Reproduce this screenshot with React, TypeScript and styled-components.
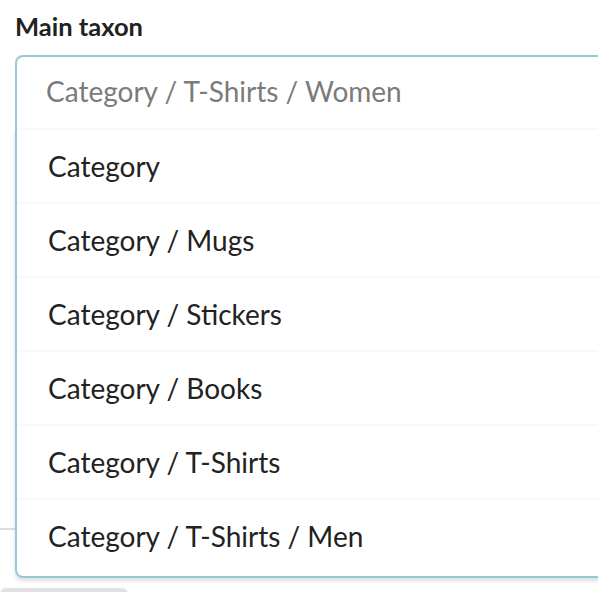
import React from "react";
import styled, { createGlobalStyle } from "styled-components";

const GlobalStyle = createGlobalStyle`
  html, body {
    margin: 0;
    padding: 0;
    background: #ffffff;
    overflow: hidden;
    font-family: Lato, "Open Sans", "Liberation Sans", sans-serif;
  }
`;

const taxons = [
  "Category",
  "Category / Mugs",
  "Category / Stickers",
  "Category / Books",
  "Category / T-Shirts",
  "Category / T-Shirts / Men",
];

export default function App() {
  return (
    <Page>
      <GlobalStyle />
      <Field>
        <Label>Main taxon</Label>
        <Dropdown>
          <Selected>Category / T-Shirts / Women</Selected>
          <Menu>
            {taxons.map((t) => (
              <Item key={t}>{t}</Item>
            ))}
          </Menu>
        </Dropdown>
      </Field>
      <Divider />
      <GhostButton />
    </Page>
  );
}

const Page = styled.div`
  position: relative;
  width: 598px;
  height: 592px;
  overflow: hidden;
`;

const Field = styled.div`
  display: flex;
  flex-direction: column;
  gap: 14px;
  padding: 11px 0 0 15px;
`;

const Label = styled.label`
  font-size: 25.5px;
  font-weight: 700;
  color: #222222;
  line-height: 30px;
`;

const Dropdown = styled.div`
  position: relative;
  width: 640px;
  height: 74px;
  box-sizing: border-box;
  border: 2px solid #96c8da;
  border-bottom: none;
  border-radius: 8px 8px 0 0;
  background: #ffffff;
  z-index: 10;
`;

const Selected = styled.div`
  display: flex;
  align-items: center;
  height: 72px;
  box-sizing: border-box;
  padding: 0 0 4px 29px;
  font-size: 28px;
  color: #7b7b7b;
`;

const Menu = styled.div`
  position: absolute;
  left: -2px;
  right: -2px;
  top: 71px;
  box-sizing: border-box;
  border: 2px solid #96c8da;
  border-top: none;
  border-radius: 0 0 8px 8px;
  background: #ffffff;
  box-shadow: 0 3px 4px 0 rgba(34, 36, 38, 0.15);
`;

const Item = styled.div`
  display: flex;
  align-items: center;
  height: 74px;
  box-sizing: border-box;
  padding-left: 31px;
  border-top: 2px solid #f8f8f8;
  font-size: 28px;
  color: #222222;

  &:last-child {
    height: 78px;
    padding-bottom: 4px;
  }
`;

const Divider = styled.div`
  width: 40px;
  height: 2px;
  margin-top: 399px;
  background: #dededf;
`;

const GhostButton = styled.div`
  width: 128px;
  height: 20px;
  margin-top: 58px;
  border-radius: 6px;
  background: #e0e1e2;
`;
